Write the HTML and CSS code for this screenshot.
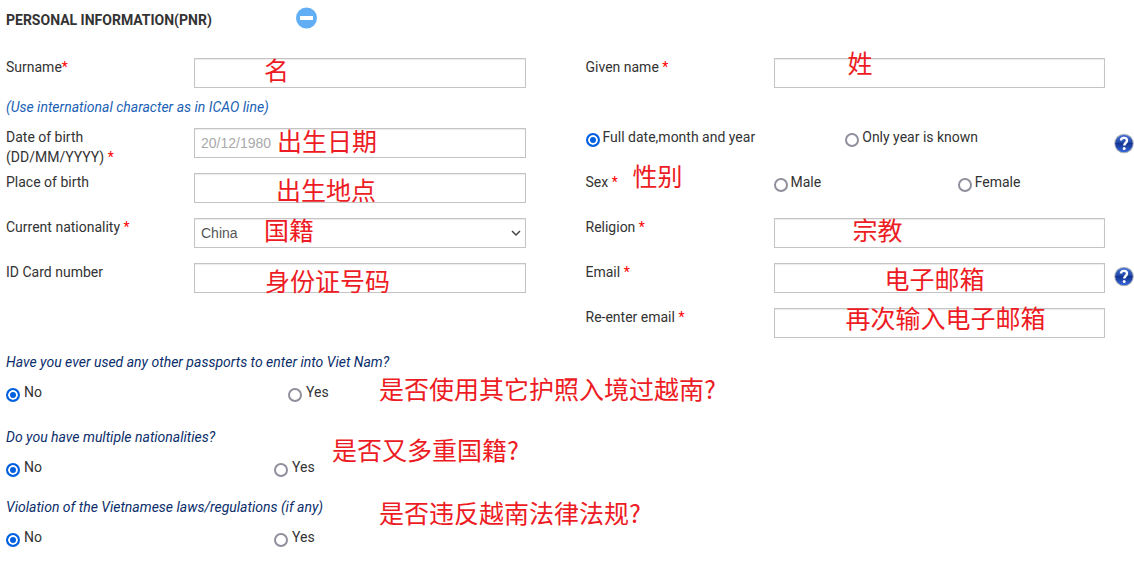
FILE: index.html
```html
<!DOCTYPE html>
<html lang="en">
<head>
  <meta charset="utf-8">
  <title>Personal information</title>
  <link rel="stylesheet" href="styles.css">
</head>
<body>
  <form class="pnr-form">
    <div class="form-header">
      <h1>PERSONAL INFORMATION(PNR)</h1>
      <button type="button" class="icon-button" aria-label="Collapse">
        <svg width="22" height="22" viewBox="0 0 22 22">
          <circle cx="10.5" cy="11" r="10.5" fill="#62aef5"/>
          <rect x="4" y="9" width="13" height="4" fill="#fff"/>
        </svg>
      </button>
    </div>

    <div class="row row-name">
      <label for="surname">Surname<span class="required">*</span></label>
      <div class="field">
        <input type="text" class="control" id="surname">
        <span class="note note-surname" lang="zh">名</span>
      </div>
      <label class="col-right" for="given-name">Given name <span class="required">*</span></label>
      <div class="field">
        <input type="text" class="control" id="given-name">
        <span class="note note-given" lang="zh">姓</span>
      </div>
    </div>

    <p class="hint">(Use international character as in ICAO line)</p>

    <div class="row">
      <label for="birth-date">Date of birth<br>(DD/MM/YYYY) <span class="required">*</span></label>
      <div class="field">
        <input type="text" class="control" id="birth-date" placeholder="20/12/1980">
        <span class="note note-birth-date" lang="zh">出生日期</span>
      </div>
      <div class="date-type">
        <label class="radio"><input type="radio" name="date-type" checked>Full date,month and year</label>
        <label class="radio"><input type="radio" name="date-type">Only year is known</label>
      </div>
      <button type="button" class="icon-button help" aria-label="Help">
        <svg width="20" height="21" viewBox="0 0 20 21">
          <defs>
            <linearGradient id="help-blue" x1="0" y1="0" x2="0" y2="1">
              <stop offset="0" stop-color="#4a76d6"/>
              <stop offset="0.45" stop-color="#1f47a8"/>
              <stop offset="0.5" stop-color="#12338f"/>
              <stop offset="1" stop-color="#3768dc"/>
            </linearGradient>
          </defs>
          <circle cx="10" cy="10.5" r="9.8" fill="#b4b7bd"/>
          <circle cx="10" cy="10.5" r="8.8" fill="url(#help-blue)"/>
          <path d="M7 7.500C7 4 13 4 13 7.500C13 10 10.200 10 10.200 12.600" fill="none" stroke="#fff" stroke-width="2.400"/>
          <circle cx="10.200" cy="15.400" r="1.500" fill="#fff"/>
        </svg>
      </button>
    </div>

    <div class="row">
      <label for="birth-place">Place of birth</label>
      <div class="field">
        <input type="text" class="control" id="birth-place">
        <span class="note note-birth-place" lang="zh">出生地点</span>
      </div>
      <div class="col-right field-label">
        <span id="sex-label">Sex <span class="required">*</span></span>
        <span class="note note-sex" lang="zh">性别</span>
      </div>
      <div class="sex-options" role="radiogroup" aria-labelledby="sex-label">
        <label class="radio"><input type="radio" name="sex">Male</label>
        <label class="radio"><input type="radio" name="sex">Female</label>
      </div>
    </div>

    <div class="row">
      <label for="nationality">Current nationality <span class="required">*</span></label>
      <div class="field">
        <select class="control" id="nationality">
          <option>China</option>
        </select>
        <svg class="chevron" width="10" height="8" viewBox="0 0 10 8">
          <path d="M1 2L5 6L9 2" fill="none" stroke="#444" stroke-width="1.500"/>
        </svg>
        <span class="note note-nationality" lang="zh">国籍</span>
      </div>
      <label class="col-right" for="religion">Religion <span class="required">*</span></label>
      <div class="field">
        <input type="text" class="control" id="religion">
        <span class="note note-religion" lang="zh">宗教</span>
      </div>
    </div>

    <div class="row">
      <label for="id-card">ID Card number</label>
      <div class="field">
        <input type="text" class="control" id="id-card">
        <span class="note note-id-card" lang="zh">身份证号码</span>
      </div>
      <label class="col-right" for="email">Email <span class="required">*</span></label>
      <div class="field">
        <input type="email" class="control" id="email">
        <span class="note note-email" lang="zh">电子邮箱</span>
      </div>
      <button type="button" class="icon-button help help-email" aria-label="Help">
        <svg width="20" height="21" viewBox="0 0 20 21">
          <circle cx="10" cy="10.5" r="9.8" fill="#b4b7bd"/>
          <circle cx="10" cy="10.5" r="8.8" fill="url(#help-blue)"/>
          <path d="M7 7.500C7 4 13 4 13 7.500C13 10 10.200 10 10.200 12.600" fill="none" stroke="#fff" stroke-width="2.400"/>
          <circle cx="10.200" cy="15.400" r="1.500" fill="#fff"/>
        </svg>
      </button>
    </div>

    <div class="row">
      <label class="col-right" for="email-again">Re-enter email <span class="required">*</span></label>
      <div class="field">
        <input type="email" class="control" id="email-again">
        <span class="note note-email-again" lang="zh">再次输入电子邮箱</span>
      </div>
    </div>

    <fieldset class="question question-passports">
      <legend>Have you ever used any other passports to enter into Viet Nam?</legend>
      <div class="answers">
        <label class="radio"><input type="radio" name="passports" checked>No</label>
        <label class="radio"><input type="radio" name="passports">Yes</label>
      </div>
      <span class="note note-passports" lang="zh">是否使用其它护照入境过越南?</span>
    </fieldset>

    <fieldset class="question">
      <legend>Do you have multiple nationalities?</legend>
      <div class="answers">
        <label class="radio"><input type="radio" name="multiple" checked>No</label>
        <label class="radio"><input type="radio" name="multiple">Yes</label>
      </div>
      <span class="note note-multiple" lang="zh">是否又多重国籍?</span>
    </fieldset>

    <fieldset class="question">
      <legend>Violation of the Vietnamese laws/regulations (if any)</legend>
      <div class="answers">
        <label class="radio"><input type="radio" name="violation" checked>No</label>
        <label class="radio"><input type="radio" name="violation">Yes</label>
      </div>
      <span class="note note-violation" lang="zh">是否违反越南法律法规?</span>
    </fieldset>
  </form>
</body>
</html>
```

FILE: styles.css
```css
* {
  box-sizing: border-box;
}

body {
  margin: 0;
  background: #fff;
  color: #333;
  font-family: Roboto, sans-serif;
  font-size: 14px;
  line-height: 20px;
}

.pnr-form {
  padding-left: 6px;
}

.form-header {
  display: grid;
  grid-template-columns: 290px auto;
  justify-content: start;
  align-items: start;
  padding: 7px 0 27px;
}

.form-header h1 {
  margin: 3px 0 0;
  font-size: 14px;
  line-height: 20px;
}

.icon-button {
  padding: 0;
  border: 0;
  background: none;
  cursor: pointer;
}

.icon-button svg {
  display: block;
}

/* label | control | spacer | label | control | help icon */
.row {
  display: grid;
  grid-template-columns: 188px 1fr 60px 188px 1fr 29px;
  align-items: start;
  min-height: 45px;
}

.row-name {
  min-height: 40px;
}

.col-right {
  grid-column: 4;
}

.required {
  color: #f00;
}

.field,
.field-label {
  position: relative;
}

.field {
  margin-top: 1px;
}

.control {
  display: block;
  appearance: none;
  width: 100%;
  height: 30px;
  padding: 0 6px;
  border: 1px solid #c4c4c4;
  border-radius: 0;
  background: #fff;
  box-shadow: inset 0 1px 1px rgba(0,0,0,0.08);
  color: #555;
  font-family: "Liberation Sans", Arial, sans-serif;
  font-size: 14px;
}

.control::placeholder {
  color: #aaa;
}

.chevron {
  position: absolute;
  top: 11px;
  right: 5px;
  pointer-events: none;
}

.hint {
  margin: 0;
  padding-bottom: 10px;
  color: #1a5fb4;
  font-style: italic;
}

.date-type {
  grid-column: 4 / 6;
  display: grid;
  grid-template-columns: 1fr 1fr;
}

.sex-options {
  display: grid;
  grid-template-columns: 5fr 4fr;
}

.help {
  grid-column: 6;
  justify-self: end;
  margin-top: 6px;
}

.help-email {
  margin-top: 4px;
}

.radio {
  display: flex;
  align-items: flex-end;
  gap: 3px;
}

.radio input {
  appearance: none;
  width: 14px;
  height: 14px;
  margin: 0;
  border: 2px solid #8f8f9d;
  border-radius: 50%;
  background: #fff;
}

.radio input:checked {
  border-color: #0060df;
  background: #0060df;
  box-shadow: inset 0 0 0 2px #fff;
}

.question {
  position: relative;
  min-width: 0;
  margin: 0;
  padding: 0 0 20px;
  border: 0;
}

.question-passports {
  padding-bottom: 25px;
}

.question legend {
  padding: 0 0 10px;
  color: #0b2e6b;
  font-style: italic;
}

.answers {
  display: grid;
  grid-template-columns: 268px auto;
  justify-content: start;
}

.answers .radio {
  gap: 4px;
}

.question-passports .answers {
  grid-template-columns: 282px auto;
}

/* red translations written over the form */
.note {
  position: absolute;
  color: #ed1c24;
  font-family: "Noto Sans CJK SC", sans-serif;
  font-size: 25px;
  font-weight: 400;
  line-height: 26px;
  white-space: nowrap;
  pointer-events: none;
}

.note-surname {
  top: -2px;
  left: 70px;
}

.note-given {
  top: -9px;
  left: 74px;
}

.note-birth-date {
  top: -1px;
  left: 83px;
}

.note-birth-place {
  top: 3px;
  left: 82px;
}

.note-sex {
  top: -10px;
  left: 47px;
}

.note-nationality {
  top: -2px;
  left: 70px;
}

.note-religion {
  top: -2px;
  left: 79px;
}

.note-id-card {
  top: 4px;
  left: 71px;
}

.note-email {
  top: 2px;
  left: 111px;
}

.note-email-again {
  top: -4px;
  left: 72px;
}

.note-passports {
  top: -7px;
  left: 373px;
}

.note-multiple {
  top: -21px;
  left: 326px;
}

.note-violation {
  top: -28px;
  left: 373px;
}
```
